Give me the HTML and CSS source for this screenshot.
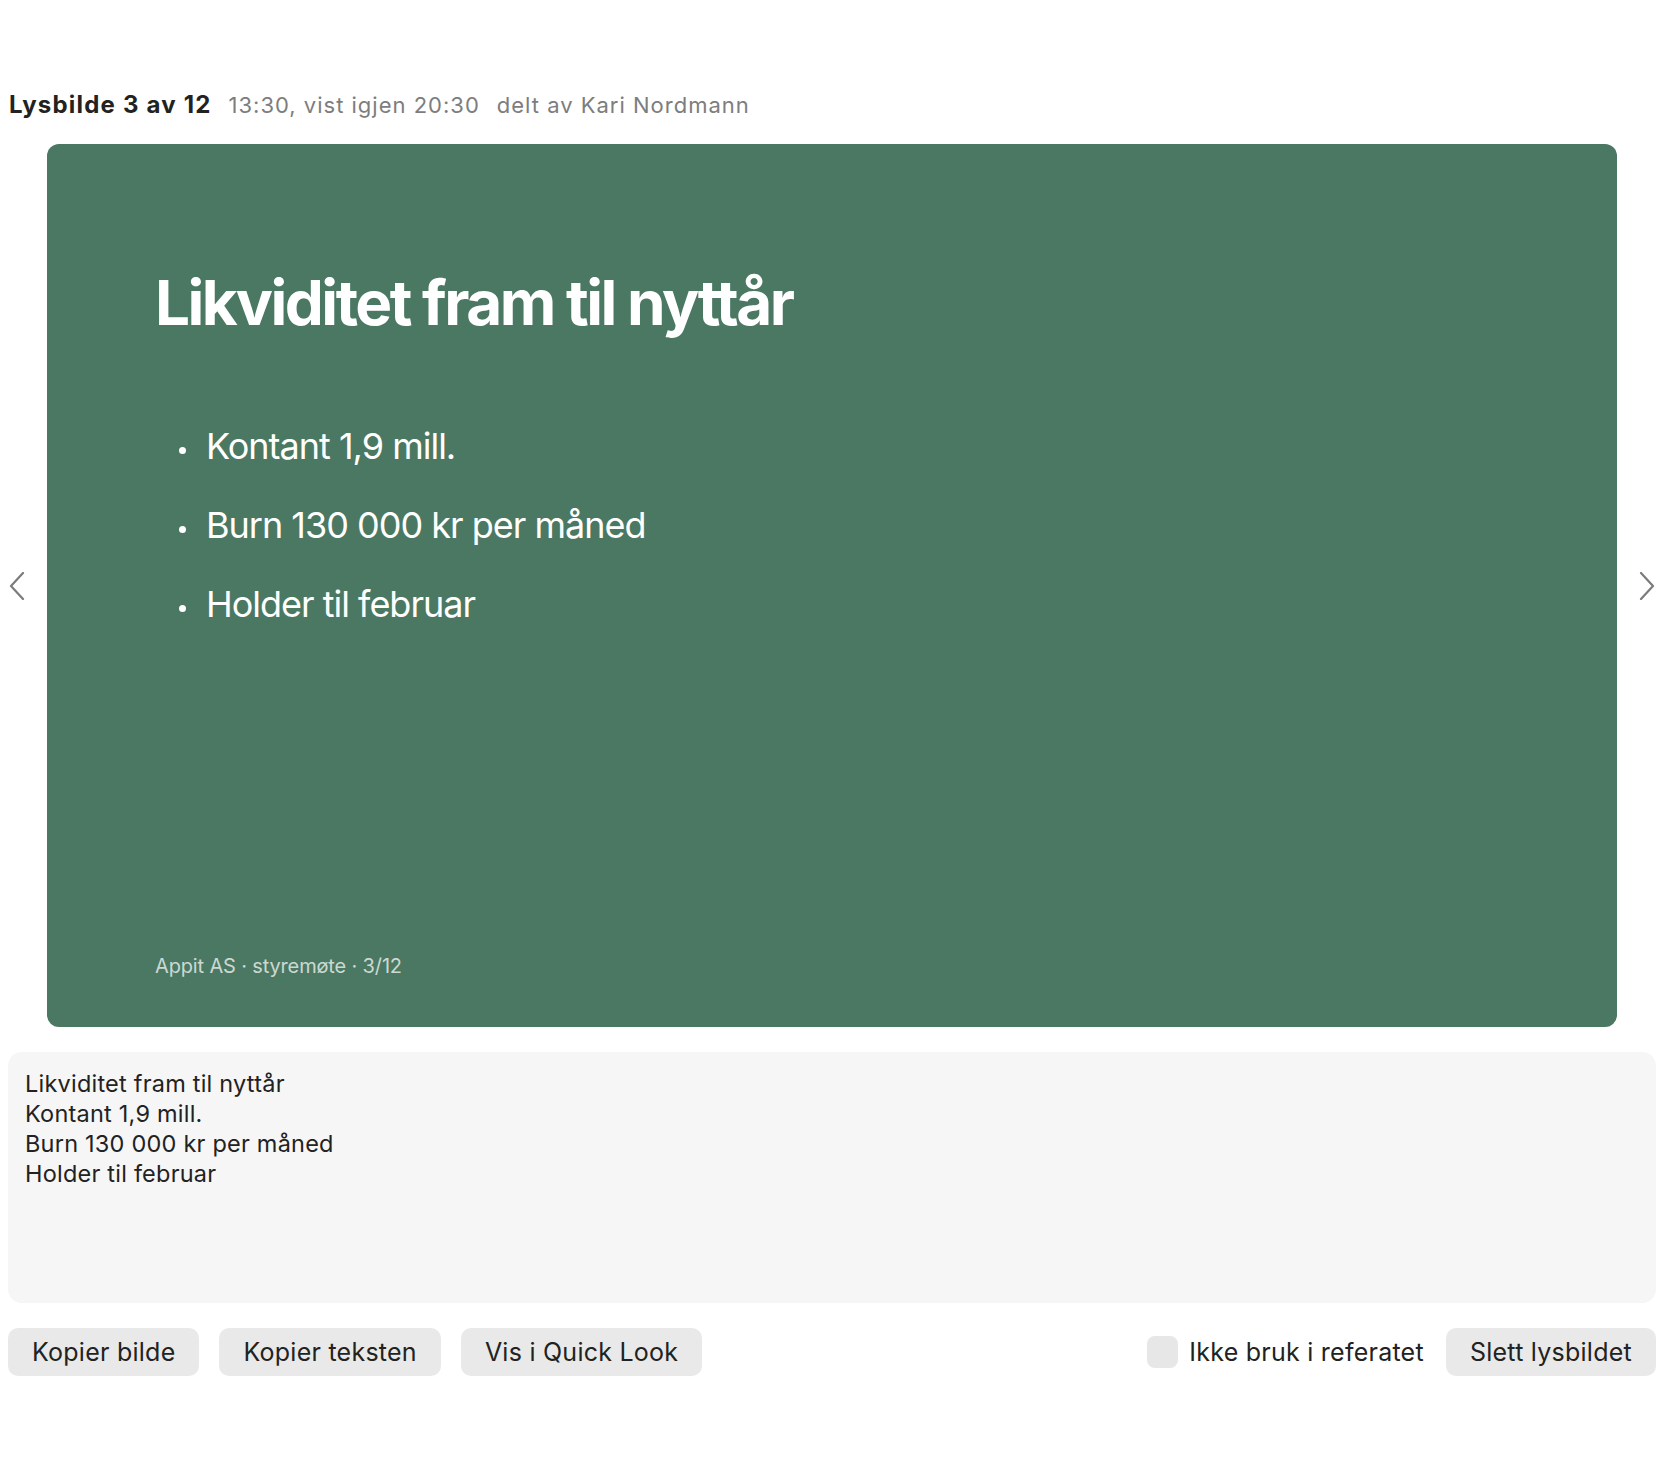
FILE: index.html
```html
<!DOCTYPE html>
<html lang="no">
<head>
    <meta charset="UTF-8">
    <title>Lysbilde 3 av 12</title>
    <link rel="stylesheet" href="styles.css">
</head>
<body>
    <div class="page">
        <div class="slide-header">
            <span class="slide-count">Lysbilde 3 av 12</span>
            <span class="meta">13:30, vist igjen 20:30</span>
            <span class="meta">delt av Kari Nordmann</span>
        </div>

        <div class="viewer">
            <button class="nav-arrow" title="Forrige">
                <svg width="16" height="28" viewBox="0 0 16 28"><polyline points="14,1 2,14 14,27" fill="none" stroke="#7b7b7b" stroke-width="2.2" stroke-linecap="round" stroke-linejoin="round"/></svg>
            </button>
            <div class="slide">
                <h1 class="slide-title">Likviditet fram til nyttår</h1>
                <ul class="slide-bullets">
                    <li>Kontant 1,9 mill.</li>
                    <li>Burn 130 000 kr per måned</li>
                    <li>Holder til februar</li>
                </ul>
                <div class="slide-footer">Appit AS · styremøte · 3/12</div>
            </div>
            <button class="nav-arrow" title="Neste">
                <svg width="16" height="28" viewBox="0 0 16 28"><polyline points="2,1 14,14 2,27" fill="none" stroke="#7b7b7b" stroke-width="2.2" stroke-linecap="round" stroke-linejoin="round"/></svg>
            </button>
        </div>

        <div class="slide-text">Likviditet fram til nyttår
Kontant 1,9 mill.
Burn 130 000 kr per måned
Holder til februar</div>

        <div class="actions">
            <button class="btn">Kopier bilde</button>
            <button class="btn">Kopier teksten</button>
            <button class="btn">Vis i Quick Look</button>
            <div class="spacer"></div>
            <label class="check">
                <span class="check-box"></span>
                Ikke bruk i referatet
            </label>
            <button class="btn">Slett lysbildet</button>
        </div>
    </div>
</body>
</html>
```

FILE: styles.css
```css
body {
    margin: 8px;
    font-family: Inter, "Noto Sans", sans-serif;
    color: #222;
    background-color: #fff;
}
.page {
    padding-top: 82px;
}
.slide-header {
    display: flex;
    align-items: baseline;
    gap: 17px;
    line-height: 30px;
}
.slide-count {
    font-size: 24px;
    font-weight: 700;
    letter-spacing: 1.2px;
    color: #222;
    padding-left: 1px;
}
.meta {
    font-size: 22px;
    letter-spacing: 1px;
    color: #7d7d7d;
}
.viewer {
    display: flex;
    align-items: center;
    gap: 21px;
    margin-top: 24px;
}
.nav-arrow {
    width: 18px;
    padding: 0;
    border: none;
    background: none;
    display: flex;
    justify-content: center;
    cursor: pointer;
}
.slide {
    flex: 1;
    aspect-ratio: 16 / 9;
    background-color: #4b7862;
    border-radius: 12px;
    color: #fff;
    padding: 122px 108px 49px;
    box-sizing: border-box;
    display: flex;
    flex-direction: column;
}
.slide-title {
    margin: 0;
    font-size: 62px;
    line-height: 1.2;
    font-weight: 700;
    letter-spacing: -2.5px;
}
.slide-bullets {
    list-style: none;
    margin: 67px 0 0;
    padding: 0;
}
.slide-bullets li {
    font-size: 36px;
    line-height: 79px;
    letter-spacing: -1px;
    padding-left: 51px;
    position: relative;
}
.slide-bullets li::before {
    content: "";
    position: absolute;
    left: 24px;
    top: 40px;
    width: 7px;
    height: 7px;
    border-radius: 50%;
    background-color: #fff;
}
.slide-footer {
    margin-top: auto;
    font-size: 20px;
    line-height: 24px;
    letter-spacing: -0.15px;
    color: rgba(255, 255, 255, 0.72);
}
.slide-text {
    margin-top: 25px;
    height: 251px;
    box-sizing: border-box;
    padding: 17px 17px;
    background-color: #f6f6f6;
    border-radius: 14px;
    font-size: 23.5px;
    line-height: 30px;
    letter-spacing: 0.22px;
    white-space: pre-line;
    color: #222;
}
.actions {
    display: flex;
    align-items: center;
    gap: 20px;
    margin-top: 25px;
}
.spacer {
    flex: 1;
}
.btn {
    height: 48px;
    padding: 0 24px;
    border: none;
    border-radius: 10px;
    background-color: #e9e9e9;
    font-family: inherit;
    font-size: 25px;
    letter-spacing: 0.25px;
    color: #222;
    cursor: pointer;
}
.btn:hover {
    background-color: #e0e0e0;
}
.check {
    display: flex;
    align-items: center;
    gap: 11px;
    font-size: 25px;
    letter-spacing: 0.25px;
    color: #222;
    margin-right: 2px;
}
.check-box {
    width: 31px;
    height: 32px;
    border-radius: 8px;
    background-color: #e7e7e7;
}
```
